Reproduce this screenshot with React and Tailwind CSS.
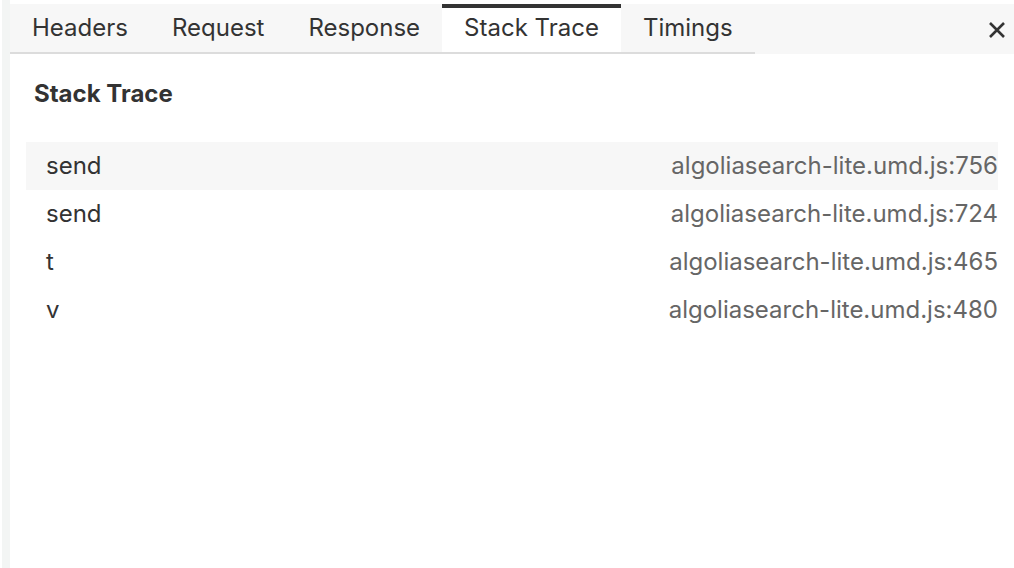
import React from "react";

const tabs = ["Headers", "Request", "Response", "Stack Trace", "Timings"];

const frames = [
  { fn: "send", file: "algoliasearch-lite.umd.js:756" },
  { fn: "send", file: "algoliasearch-lite.umd.js:724" },
  { fn: "t", file: "algoliasearch-lite.umd.js:465" },
  { fn: "v", file: "algoliasearch-lite.umd.js:480" },
];

const App = () => {
  const active = "Stack Trace";

  return (
    <div className="flex h-[568px] w-[1014px] bg-white font-['Inter',sans-serif] text-[#333]">
      <div className="ml-[2px] w-[8px] bg-[#f3f5f4]"></div>
      <div className="flex flex-1 flex-col pt-[4px]">
        <div className="flex h-[50px] bg-[#f7f7f7]">
          <div className="flex border-b-2 border-[#dcdcdc]">
            {tabs.map((tab) =>
              tab === active ? (
                <div
                  key={tab}
                  className="flex items-center border-t-4 border-[#333] bg-white px-[22px] pb-[4px] text-[24px] leading-[28px]"
                >
                  {tab}
                </div>
              ) : (
                <div
                  key={tab}
                  className="flex items-center px-[22px] text-[24px] leading-[28px]"
                >
                  {tab}
                </div>
              )
            )}
          </div>
          <div className="flex flex-1 items-center justify-end pr-[8px]">
            <svg width="18" height="18" viewBox="0 0 18 18" className="mt-[2px]">
              <path
                d="M2 2 L16 16 M16 2 L2 16"
                stroke="#333"
                strokeWidth="2.6"
                strokeLinecap="butt"
              />
            </svg>
          </div>
        </div>

        <div className="px-[16px] pt-[26px]">
          <h2 className="pl-[8px] text-[24px] font-bold leading-[28px]">Stack Trace</h2>
          <div className="mt-[34px]">
            {frames.map((f, i) => (
              <div
                key={i}
                className={`flex h-[48px] items-center justify-between pl-[20px] text-[24px] leading-[28px] ${
                  i === 0 ? "bg-[#f7f7f7]" : ""
                }`}
              >
                <span>{f.fn}</span>
                <span className="text-[#666]">{f.file}</span>
              </div>
            ))}
          </div>
        </div>
      </div>
    </div>
  );
};

export default App;
